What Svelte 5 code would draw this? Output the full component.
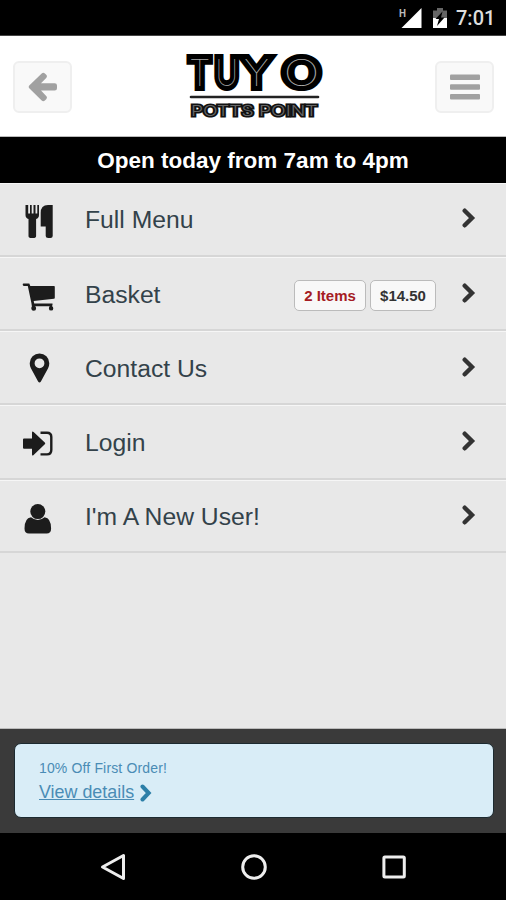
<script>
  const rows = [
    { label: 'Full Menu', icon: 'menu', height: 74 },
    { label: 'Basket', icon: 'cart', height: 74, items: '2 Items', total: '$14.50' },
    { label: 'Contact Us', icon: 'pin', height: 74 },
    { label: 'Login', icon: 'login', height: 75 },
    { label: "I'm A New User!", icon: 'user', height: 73 }
  ];
  const word = [
    { c: 'T', x: 189, w: 21.500 },
    { c: 'U', x: 215.500, w: 22.500 },
    { c: 'Y', x: 244, w: 25 },
    { c: 'O', x: 283.500, w: 36 }
  ];
</script>

<div class="screen">
  <div class="status">
    <svg width="24" height="26" viewBox="0 0 24 26">
      <text x="0" y="12" class="net" textLength="7" lengthAdjust="spacingAndGlyphs">H</text>
      <path d="M22.500 3v20H2.500z" fill="#fff" />
    </svg>
    <svg class="battery" width="14" height="20" viewBox="0 0 14 20">
      <path d="M0 2.500h4V0h6v2.500h4V10H0z" fill="#666" />
      <path d="M0 10h14v10H0z" fill="#fff" />
      <path d="M9.500 3.500 2.500 11h3.500l-2 7 7.500-8.500H8z" fill="#000" />
    </svg>
    <span class="clock">7:01</span>
  </div>

  <header>
    <button aria-label="Back">
      <svg width="30" height="30" viewBox="0 0 30 30">
        <path d="M1.500 13.200 13.700 1.400q1.600-1.400 3.200 0l1.300 1.300q1.500 1.600 0 3.200L13 11.200h13.700q2.300 0 2.300 2.300v2.800q0 2.300-2.300 2.300H13l5.200 5.400q1.500 1.600 0 3.200l-1.300 1.300q-1.600 1.400-3.200 0L1.500 16.600q-1.600-1.700 0-3.400z" fill="#a1a1a1" />
      </svg>
    </button>
    <svg class="logo" width="142" height="70" viewBox="183 50 142 70">
      {#each word as l}
        <text class="inline" x={l.x} y="85.500" textLength={l.w} lengthAdjust="spacingAndGlyphs">{l.c}</text>
      {/each}
      <path d="M191 97h127" stroke="#222" stroke-width="2.600" stroke-linecap="round" />
      <text class="sub" x="191" y="115.500" textLength="126.500" lengthAdjust="spacingAndGlyphs">POTTS POINT</text>
    </svg>
    <button aria-label="Menu">
      <svg width="30" height="26" viewBox="0 0 30 26" fill="#a1a1a1">
        <rect y="0.500" width="30" height="5.400" rx="1" />
        <rect y="10.300" width="30" height="5.400" rx="1" />
        <rect y="20" width="30" height="5.400" rx="1" />
      </svg>
    </button>
  </header>

  <div class="hours">Open today from 7am to 4pm</div>

  <main>
    {#each rows as r}
      <div class="row" style="height: {r.height}px">
        <svg class="icon" width="34" height="36" viewBox="0 0 34 36" fill="#1c1c1c">
          {#if r.icon === 'menu'}
            <path d="M4.500 2v10q0 3 3 4v17q0 2 3 2h1.600q3 0 3-2V16q2.900-1 2.900-4V2h-1.700v8.500h-1.800V2h-2v8.500h-1.800V2H9v8.500H7.200V2z" />
            <path d="M31.700 2v31q0 2-2.300 2h-2.200q-2.500 0-2.500-2v-9.500h-5V10q0-8 7.300-8z" />
          {:else if r.icon === 'cart'}
            <path transform="translate(0 1)" d="M2.500 4.500h5.800l1 2.500H33q.8 0 .8.800v11q0 .8-.8 1L12.700 22l.5 2.500H31.500v1.800l-.6.600q1.400.7 1.400 2.500 0 2.200-2.200 2.200t-2.200-2.200q0-1.400.8-2.200H14.200q.9.700.9 2.200 0 2.300-2.300 2.300-2.500 0-2.500-2.300 0-1 .6-1.800L10.400 24 6.800 7H3.500q-1.800 0-1.800-1.200 0-1.300.8-1.300z" />
          {:else if r.icon === 'pin'}
            <path fill-rule="evenodd" d="M18.500 1.500a9.800 9.800 0 0 1 9.800 9.800q0 2.500-1.200 5L19.900 29.500q-1.400 2-2.800 0L9.900 16.300q-1.200-2.500-1.200-5a9.800 9.800 0 0 1 9.800-9.800zm0 4.900a4.900 4.900 0 1 0 0 9.800 4.900 4.900 0 0 0 0-9.800z" />
          {:else if r.icon === 'login'}
            <path d="M2 13.600q0-1 1-1h8V6.800q0-2 1.600-.7l11.200 10.300q1 .9 0 1.800L12.600 29Q11 30.300 11 28.300v-5.600H3q-1 0-1-1z" />
            <path d="M19.500 6.700h6.500q4.300 0 4.300 4.300v13.100q0 4.300-4.300 4.300h-6.500" fill="none" stroke="#1c1c1c" stroke-width="2.400" />
          {:else}
            <circle cx="16.800" cy="11.600" r="7.500" />
            <path d="M10 17.200q6.800 5.600 13.600 0 6.500.8 6.500 11.300 0 5-4.500 5H8q-4.500 0-4.500-5 0-10.500 6.500-11.300z" />
          {/if}
        </svg>
        <span class="label">{r.label}</span>
        {#if r.items}
          <span class="badge items">{r.items}</span>
          <span class="badge total">{r.total}</span>
        {/if}
        <svg class="chev" width="14" height="20" viewBox="0 0 14 20">
          <path d="M2.700 2.700 10 10l-7.300 7.300" fill="none" stroke="#333" stroke-width="4.400" stroke-linecap="round" />
        </svg>
      </div>
    {/each}
  </main>

  <footer>
    <div class="offer">
      <div class="promo">10% Off First Order!</div>
      <div class="details">
        <span>View details</span>
        <svg width="12" height="18" viewBox="0 0 12 18">
          <path d="M2.500 2.500 8.700 9l-6.200 6.500" fill="none" stroke="#2c7fa8" stroke-width="4" stroke-linecap="round" />
        </svg>
      </div>
    </div>
  </footer>

  <nav>
    <svg width="28" height="30" viewBox="0 0 28 30"><path d="M24.500 3.500v23L3.500 15z" /></svg>
    <svg width="28" height="30" viewBox="0 0 28 30"><circle cx="14" cy="15" r="11.300" /></svg>
    <svg width="28" height="30" viewBox="0 0 28 30"><rect x="3.900" y="4.900" width="20.400" height="20.200" rx="1" /></svg>
  </nav>
</div>

<style>
  .screen {
    width: 506px;
    height: 900px;
    display: flex;
    flex-direction: column;
    overflow: hidden;
    background: #e8e8e8;
    font-family: 'Liberation Sans', Arial, sans-serif;
  }
  .status {
    box-sizing: border-box;
    height: 36px;
    flex: none;
    display: flex;
    align-items: flex-start;
    padding: 5px 0 0 399px;
    background: #000;
    border-bottom: 1px solid #444;
  }
  .status svg {
    flex: none;
    overflow: visible;
  }
  .net {
    font: bold 11px Roboto, sans-serif;
    fill: #bbb;
  }
  .battery {
    margin: 3px 0 0 10px;
  }
  .clock {
    margin-left: 9px;
    font: 500 20px/27px Roboto, sans-serif;
    color: #ddd;
  }
  header {
    box-sizing: border-box;
    height: 101px;
    flex: none;
    display: flex;
    align-items: center;
    justify-content: space-between;
    padding: 1px 12px 0 13px;
    background: #fff;
    border-bottom: 1px solid #bbb;
  }
  button {
    box-sizing: border-box;
    width: 59px;
    height: 52px;
    padding: 0;
    display: flex;
    align-items: center;
    justify-content: center;
    background: #f9f9f9;
    border: 2px solid #efefef;
    border-radius: 6px;
  }
  .logo {
    margin-bottom: 3px;
    overflow: visible;
  }
  .inline {
    font: 100 37px Inter, sans-serif;
    fill: #aaa;
    stroke: #000;
    stroke-width: 10px;
    paint-order: stroke;
  }
  .sub {
    font: 300 14.500px Inter, sans-serif;
    fill: #666;
    stroke: #111;
    stroke-width: 3.200px;
    paint-order: stroke;
  }
  .hours {
    height: 46px;
    flex: none;
    background: #000;
    color: #fff;
    text-align: center;
    font-size: 22.500px;
    font-weight: bold;
    line-height: 47px;
  }
  main {
    flex: 1;
    border-bottom: 1px solid #bbb;
  }
  .row {
    box-sizing: border-box;
    display: flex;
    align-items: center;
    padding: 0 30px 0 21px;
    border-top: 1px solid #f6f6f6;
    border-bottom: 2px solid #d6d6d6;
  }
  .row:nth-child(2),
  .row:nth-child(3) {
    padding-top: 2px;
  }
  .icon {
    flex: none;
    margin-top: 3px;
    overflow: visible;
  }
  .label {
    margin-left: 30px;
    margin-right: auto;
    font-size: 24.700px;
    color: #33424a;
  }
  .row:nth-child(n + 4) .label {
    margin-top: 1px;
  }
  .badge {
    box-sizing: border-box;
    height: 31px;
    margin-top: 2px;
    border: 1px solid #bbb;
    border-radius: 5px;
    background: #f8f8f8;
    text-align: center;
    font-size: 15px;
    font-weight: bold;
    line-height: 30px;
    color: #333;
  }
  .items {
    width: 72px;
    margin-right: 4px;
    color: #a51c24;
  }
  .total {
    width: 66px;
    margin-right: 26px;
  }
  .chev {
    flex: none;
    margin-top: -3px;
  }
  footer {
    box-sizing: border-box;
    height: 104px;
    flex: none;
    padding: 14px 12px 15px 14px;
    background: #3a3a3a;
  }
  .offer {
    box-sizing: border-box;
    height: 75px;
    padding: 15px 24px 0;
    border: 1px solid #1c2a30;
    border-radius: 7px;
    background: #d9edf7;
    color: #4a8cb5;
  }
  .promo {
    font-size: 14px;
    letter-spacing: 0.150px;
    line-height: 18px;
  }
  .details {
    display: flex;
    align-items: center;
    margin-top: 3px;
    font-size: 17.900px;
    line-height: 25px;
  }
  .details span {
    text-decoration: underline;
  }
  .details svg {
    margin-left: 6px;
    margin-top: 1px;
  }
  nav {
    height: 67px;
    flex: none;
    display: flex;
    align-items: center;
    justify-content: space-between;
    padding: 0 98px 0 99px;
    background: #000;
  }
  nav svg {
    fill: none;
    stroke: #eee;
    stroke-width: 3;
    stroke-linejoin: round;
  }
</style>
